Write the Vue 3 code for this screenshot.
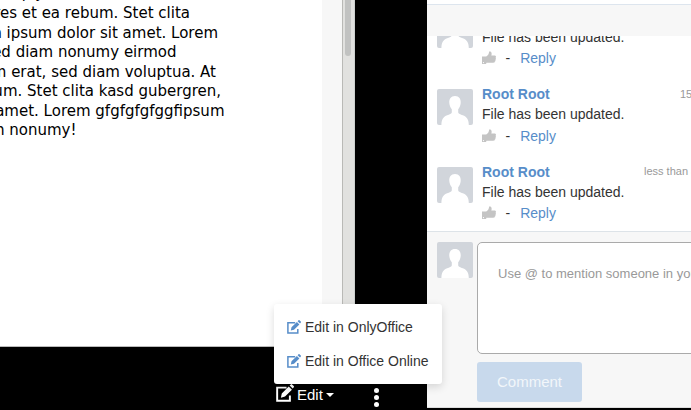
<script setup>
const lines = [
  { text: 'aliquyam', end: 68 },
  { text: 'ores et ea rebum. Stet clita', end: 190 },
  { text: 'm ipsum dolor sit amet. Lorem', end: 218 },
  { text: 'sed diam nonumy eirmod', end: 176.5 },
  { text: 'm erat, sed diam voluptua. At', end: 216 },
  { text: 'rum. Stet clita kasd gubergren,', end: 221 },
  { text: 'amet. Lorem gfgfgfgfggfipsum', end: 224.5 },
  { text: 'm nonumy!', end: 76.5 },
]
const comments = [
  { name: 'Root Root', text: 'File has been updated.', time: '17 minutes ago' },
  { name: 'Root Root', text: 'File has been updated.', time: '15 minutes ago' },
  { name: 'Root Root', text: 'File has been updated.', time: 'less than a minute ago' },
]
const actions = ['Edit in OnlyOffice', 'Edit in Office Online']
const person = 'M18 7c-4.100 0-6 3-5.700 7 .2 2.600 1.200 4.800 2.500 6.300v3.200c-.5 1.400-2.300 1.900-4.600 2.700C6.500 27.600 4.400 30 4.400 36h27.400c0-6-2.300-8.400-6-9.800-2.300-.8-4.100-1.300-4.600-2.700v-3.200c1.300-1.500 2.300-3.700 2.500-6.300.3-4-1.600-7-5.700-7z'
</script>

<template>
  <div class="viewer">
    <main class="stage">
      <div class="document">
        <div class="sheet">
          <div v-for="l in lines" :key="l.text" class="line" :style="{ width: l.end + 'px' }"><span>{{ l.text }}</span></div>
        </div>
        <div class="gutter"></div>
        <div class="scrollbar"><div class="thumb"></div></div>
      </div>
      <footer class="toolbar">
        <svg class="edit-icon" viewBox="0 0 14 14"><path class="frame" d="M8.200 2.800H.9v10.200h9.900V9" /><path d="M3.800 10.600l.7-3.300 5.400-5.400 2.500 2.500L7 9.800zM10.600 1.200l.9-.9q.5-.5 1 0l1.300 1.300q.5.500 0 1l-.8.900z" /></svg>
        <span class="edit-label">Edit</span>
        <i class="caret"></i>
        <div class="dots"><i></i><i></i><i></i></div>
      </footer>
    </main>
    <aside class="panel">
      <header class="bar"></header>
      <div class="feed">
        <article v-for="(c, i) in comments" :key="i" class="comment">
          <svg class="avatar" viewBox="0 0 36 36"><path :d="person" /></svg>
          <div class="body">
            <div class="head"><b>{{ c.name }}</b><time>{{ c.time }}</time></div>
            <p>{{ c.text }}</p>
            <div class="links">
              <svg class="thumb-up" viewBox="0 0 14 14"><path d="M0 5.500h4.200C6.200 4.300 7 2.800 7.100.5h1.400C9.900 1.500 9.800 3 9.300 4.500h3.600c1.300.3 1.300 1.700.7 2.300.5.700.3 1.600-.2 2 .2.900 0 1.400-.6 1.700 0 .8-.5 1.200-1.500 1.200H4.500L4 13H0z" /><circle cx="1.500" cy="11.600" r=".6" fill="#fff" /></svg>
              <span class="dash">-</span><a>Reply</a>
            </div>
          </div>
        </article>
      </div>
      <section class="composer">
        <svg class="avatar" viewBox="0 0 36 36"><path :d="person" /></svg>
        <div class="entry">
          <div class="box">Use @ to mention someone in your comment</div>
          <button>Comment</button>
        </div>
      </section>
    </aside>
    <div class="menu">
      <div v-for="a in actions" :key="a" class="item">
        <svg viewBox="0 0 14 14"><path class="frame" d="M8.200 2.800H.9v10.200h9.900V9" /><path d="M3.800 10.600l.7-3.300 5.400-5.400 2.500 2.500L7 9.800zM10.600 1.200l.9-.9q.5-.5 1 0l1.300 1.300q.5.500 0 1l-.8.900z" /></svg>{{ a }}
      </div>
    </div>
  </div>
</template>

<style>
body { background: #000; overflow: hidden; }
</style>
<style scoped>
.viewer { position: relative; display: flex; width: 691px; height: 410px; overflow: hidden; background: #000; color: #333; font-family: "Liberation Sans", Arial, sans-serif; }
.stage { width: 427px; flex: none; }
.document { display: flex; width: 355px; height: 347px; box-sizing: border-box; border-bottom: 1px solid #bbb; background: #fff; overflow: hidden; }
.sheet { width: 322px; margin-top: -15.700px; font: 15px/19.6px "DejaVu Sans", sans-serif; color: #000; }
.line { display: flex; justify-content: flex-end; white-space: nowrap; height: 19.6px; }
.line span { flex: none; }
.gutter { width: 20px; background: #f7f7f7; }
.scrollbar { width: 13px; box-sizing: border-box; border-left: 1px solid #b9b9b6; border-right: 1px solid #cdd1cf; background: #e1e1df; padding-left: 2px; }
.thumb { width: 6px; height: 56px; border-radius: 0 0 3px 3px; background: #c1c2c1; }
.toolbar { height: 63px; display: flex; align-items: flex-start; box-sizing: border-box; padding: 37px 0 0 276px; color: #fff; }
.frame { fill: none; stroke: currentColor; stroke-width: 1.500; }
.edit-icon { width: 18px; height: 18px; fill: #fff; margin: 0 1px 0 0; }
.edit-label { font-size: 15px; line-height: 22px; margin-left: 2px; }
.caret { border: 4px solid transparent; border-top-color: #fff; border-bottom: 0; margin: 9px 0 0 3px; }
.dots { margin: 4px 0 0 40.500px; display: grid; gap: 2px; }
.dots i { width: 5px; height: 5px; border-radius: 50%; background: #fff; }
.panel { width: 264px; height: 408px; background: #f7f7f7; overflow: hidden; }
.bar { height: 36px; box-sizing: border-box; border-top: 4px solid #fff; box-shadow: inset 0 1px #dde5ee; }
.feed { height: 195px; background: #fff; overflow: hidden; display: flex; flex-direction: column; justify-content: flex-end; }
.comment { flex: none; height: 77.500px; display: flex; padding-left: 10px; }
.avatar { flex: none; width: 36px; height: 36px; border-radius: 2px; background: #d1d5db; fill: #fff; margin-top: 13px; }
.body { margin-left: 9px; flex: none; width: 280px; padding-top: 8px; }
.head { display: flex; height: 20px; line-height: 20px; font-size: 14px; }
.head b { color: #578dc9; width: 162px; }
time { color: #999; font-size: 11px; line-height: 18px; white-space: nowrap; }
.comment:nth-child(2) time { margin-left: 36px; line-height: 20px; }
.comment:nth-child(2) .links { margin-top: 1px; }
p { margin: 0; font-size: 14px; line-height: 20px; height: 20px; }
.links { display: flex; height: 22px; line-height: 22px; font-size: 14px; }
.thumb-up { width: 14px; height: 14px; margin-top: 4px; fill: #c4c4c4; }
.dash { margin: 0 10px 0 9.500px; }
.links a { color: #578dc9; }
.composer { display: flex; height: 177px; box-sizing: border-box; border-top: 1px solid #dde3e8; border-bottom: 1px solid #ddd; padding: 10px 0 0 10px; }
.composer .avatar { margin-top: 0; }
.entry { margin-left: 4px; flex: none; width: 300px; }
.box { height: 112px; box-sizing: border-box; border: 1px solid #aaa; border-radius: 5px; background: #fff; padding: 22px 20px; font-size: 13px; line-height: 18px; color: #999; white-space: nowrap; }
button { display: block; margin-top: 8px; width: 105px; height: 40px; border: 0; border-radius: 3px; background: #c8d9ec; color: #f2f6fa; font: 15px "Liberation Sans", Arial, sans-serif; padding: 0 0 2px; }
.menu { position: absolute; left: 274px; top: 304px; width: 168px; height: 80px; box-sizing: border-box; padding: 6px 0 0 13px; background: #fff; border-radius: 3px; box-shadow: 0 3px 8px rgba(0, 0, 0, .14); }
.item { display: flex; align-items: center; height: 34px; font-size: 14px; white-space: nowrap; }
.item svg { width: 14px; height: 14px; color: #578dc9; fill: #578dc9; margin-right: 4px; }
</style>
